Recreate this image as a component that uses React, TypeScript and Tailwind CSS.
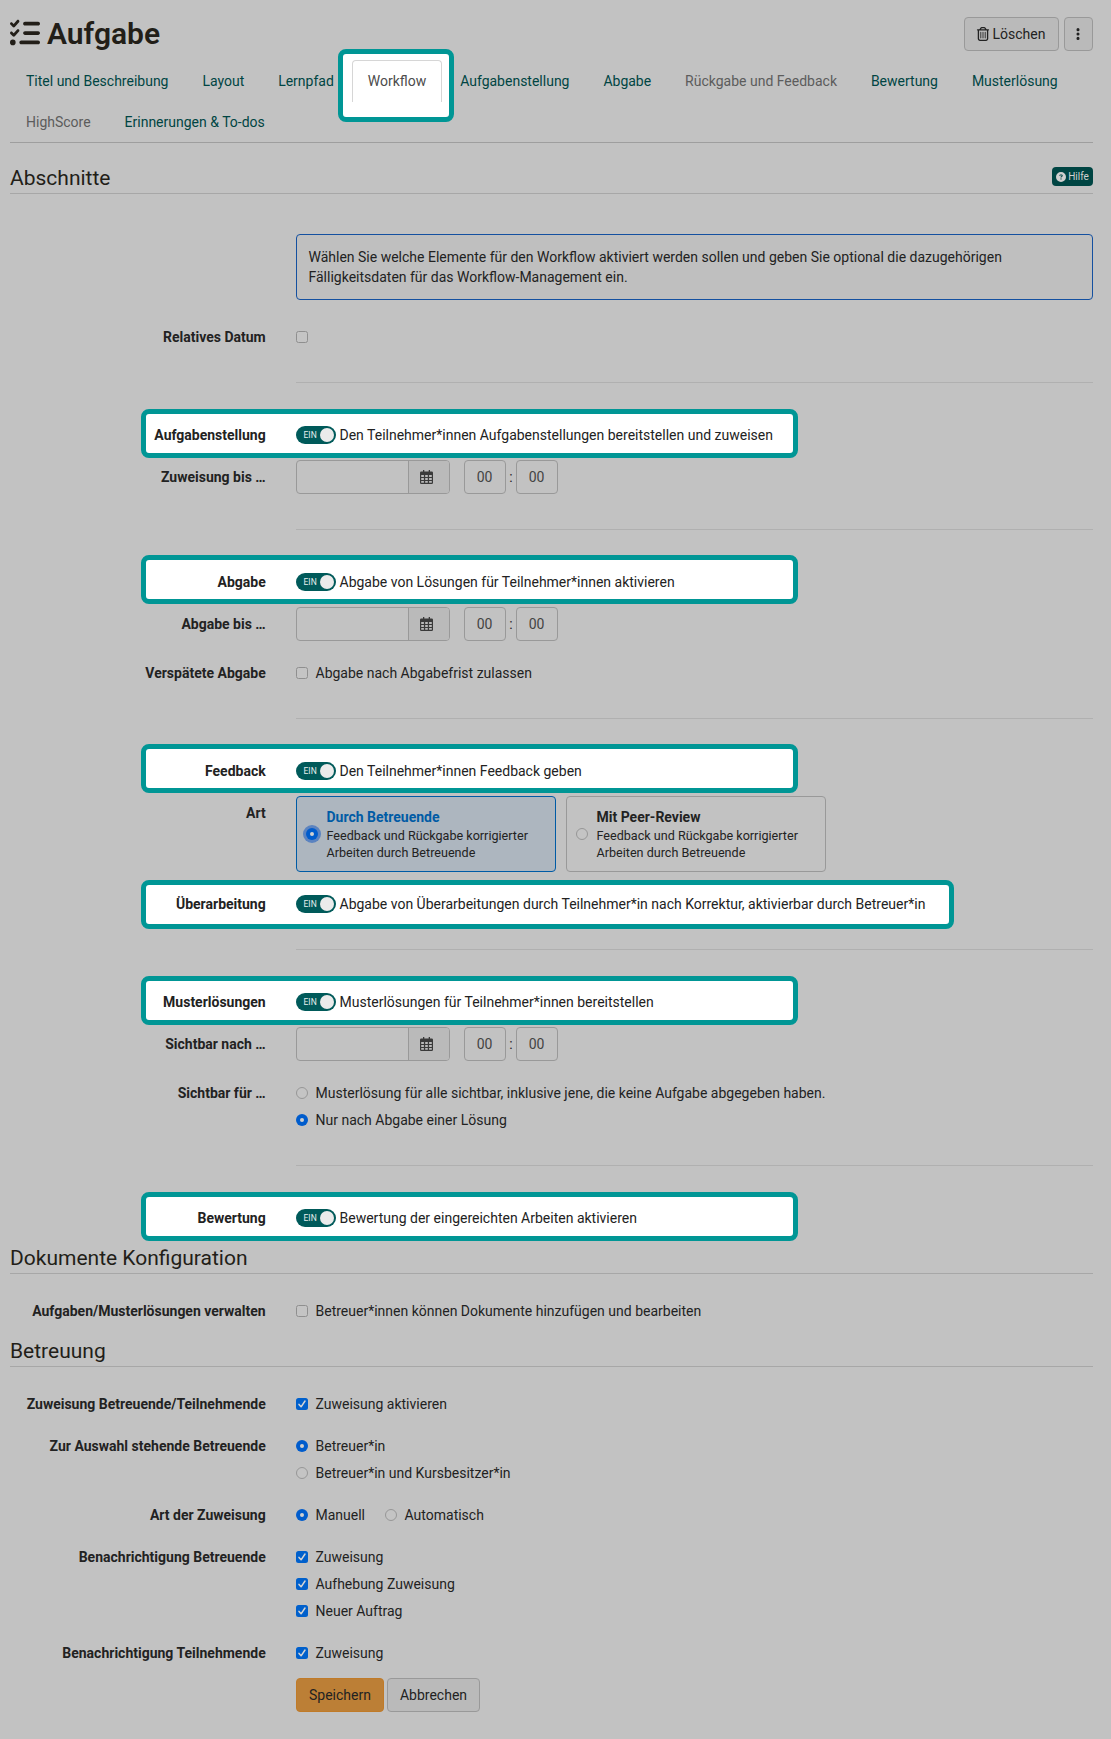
import React, { ReactNode } from "react";
import { FaListCheck, FaRegTrashCan, FaEllipsisVertical, FaCircleQuestion } from "react-icons/fa6";

type TabItem = { label: string; state?: "active" | "disabled" };

const tabs: TabItem[] = [
  { label: "Titel und Beschreibung" },
  { label: "Layout" },
  { label: "Lernpfad" },
  { label: "Workflow", state: "active" },
  { label: "Aufgabenstellung" },
  { label: "Abgabe" },
  { label: "Rückgabe und Feedback", state: "disabled" },
  { label: "Bewertung" },
  { label: "Musterlösung" },
  { label: "HighScore", state: "disabled" },
  { label: "Erinnerungen & To-dos" },
];

function Tab({ label, state }: TabItem) {
  if (state === "active") {
    return (
      <li className="relative isolate -mb-px mr-[1.92px]">
        <span className="absolute -left-3.5 -right-3 -top-[11px] h-[73px] rounded-lg border-[5px] border-[#009695] bg-white -z-10" />
        <a className="block h-[42px] rounded-t border border-b-0 border-[#d6d6d6] px-[15px] py-2.5 text-[#4c4c4c]">{label}</a>
      </li>
    );
  }
  return (
    <li className="-mb-px mr-[1.92px]">
      <a
        className={
          state === "disabled"
            ? "block border border-transparent px-[15px] py-2.5 text-[#5c5c5c]"
            : "block border border-transparent px-[15px] py-2.5 text-[#004543]"
        }
      >
        {label}
      </a>
    </li>
  );
}

function Row({ label, highlight, className = "", children }: { label?: string; highlight?: string; className?: string; children: ReactNode }) {
  return (
    <div className={"relative isolate flex " + className}>
      {highlight && <span className={"absolute left-[131px] -z-10 rounded-lg border-[5px] border-[#009695] bg-white " + highlight} />}
      <div className="w-64 shrink-0 py-[7px] pr-[0.3px] text-right font-bold">{label}</div>
      <div className="ml-[30px] min-w-0 flex-1">{children}</div>
    </div>
  );
}

function Toggle({ children }: { children: ReactNode }) {
  return (
    <div className="flex h-[34px] items-center">
      <span className="mr-[3.5px] flex h-[18px] w-10 items-center justify-between rounded-full bg-[#005a5a] pl-[7.5px] pr-0.5 text-[8.5px] leading-none text-[#e6eeee]">
        EIN
        <span className="size-3.5 rounded-full bg-[#ebebeb]" />
      </span>
      <span>{children}</span>
    </div>
  );
}

function Check({ checked, children }: { checked?: boolean; children?: ReactNode }) {
  return (
    <label className="flex h-5 items-center">
      {checked ? (
        <svg viewBox="0 0 12 12" className="mr-[7.5px] size-3 shrink-0 rounded-[2.5px] bg-[#0060cc]">
          <path d="M3 6.4 5.1 8.8 9 3" fill="none" stroke="#d4d4d4" strokeWidth="1.5" strokeLinecap="round" strokeLinejoin="round" />
        </svg>
      ) : (
        <span className="mr-[7.5px] size-3 shrink-0 rounded-[2.5px] border border-[#8f8f8f] bg-[#c4c4c4]" />
      )}
      <span>{children}</span>
    </label>
  );
}

function RadioDot({ checked }: { checked?: boolean }) {
  return checked ? (
    <span className="flex size-3 shrink-0 items-center justify-center rounded-full bg-[#005ccc]">
      <span className="size-1 rounded-full bg-[#d0d0d0]" />
    </span>
  ) : (
    <span className="block size-3 shrink-0 rounded-full border border-[#979797] bg-[#c4c4c4]" />
  );
}

function Radio({ checked, children }: { checked?: boolean; children: ReactNode }) {
  return (
    <label className="flex h-5 items-center gap-[7.5px]">
      <RadioDot checked={checked} />
      <span>{children}</span>
    </label>
  );
}

function CalendarIcon() {
  return (
    <svg viewBox="0 0 13 14" className="h-3.5 w-[13px]" fill="#3a3a3a">
      <path
        fillRule="evenodd"
        d="M3 0h1.3v1.5h4.4V0H10v1.5h1.7A1.3 1.3 0 0 1 13 2.8v9.9a1.3 1.3 0 0 1-1.3 1.3H1.3A1.3 1.3 0 0 1 0 12.7V2.8a1.3 1.3 0 0 1 1.3-1.3H3zM1.2 5v1.9h2.7V5zm4 0v1.9h2.6V5zm3.9 0v1.9h2.7V5zM1.2 8v1.9h2.7V8zm4 0v1.9h2.6V8zm3.9 0v1.9h2.7V8zM1.2 11v1.8h2.7V11zm4 0v1.8h2.6V11zm3.9 0v1.8h2.7V11z"
      />
    </svg>
  );
}

function DateTime() {
  return (
    <div className="flex h-[34px] items-center text-[#444]">
      <div className="flex h-full w-[154px] overflow-hidden rounded border border-[#999]">
        <div className="flex-1" />
        <div className="flex w-[41px] items-center border-l border-[#999] bg-[#bababa] pl-[11px]">
          <CalendarIcon />
        </div>
      </div>
      <div className="ml-3.5 flex h-full w-[42px] items-center justify-center rounded border border-[#999] pr-px">00</div>
      <span className="w-2.5 text-center text-[#222]">:</span>
      <div className="flex h-full w-[42px] items-center justify-center rounded border border-[#999] pr-px">00</div>
    </div>
  );
}

function Card({ title, selected }: { title: string; selected?: boolean }) {
  return (
    <div
      className={
        selected
          ? "flex h-[76px] w-[260px] items-center rounded border border-[#005ba5] bg-[#adb6bf] pl-[9px]"
          : "flex h-[76px] w-[260px] items-center rounded border border-[#999] pl-[9px]"
      }
    >
      <span className={selected ? "-ml-[3px] mr-[5px] block shrink-0 rounded-full bg-[#5b83c0] p-[3px]" : "mr-2 block shrink-0"}>
        <RadioDot checked={selected} />
      </span>
      <div className="pl-[0.5px]">
        <div className={selected ? "font-bold leading-5 text-[#005ba5]" : "font-bold leading-5"}>{title}</div>
        <div className="text-[12.6px] leading-[17px]">
          Feedback und Rückgabe korrigierter
          <br />
          Arbeiten durch Betreuende
        </div>
      </div>
    </div>
  );
}

function Divider({ className }: { className: string }) {
  return <div className={"ml-[286px] h-px bg-[#b0b0b0] " + className} />;
}

function Heading({ className, children }: { className: string; children: ReactNode }) {
  return <div className={"flex items-start justify-between border-b border-[#a7a7a7] text-[21px] leading-6 text-[#221e18] " + className}>{children}</div>;
}

export default function App() {
  return (
    <div className="h-[1739px] w-[1111px] overflow-hidden bg-[#c2c2c2] pl-2.5 pr-[18px] font-['Roboto',sans-serif] text-[14px] leading-5 text-[#222]">
      <header className="flex h-[60px] items-start justify-between pt-[17px]">
        <h1 className="flex h-[34px] items-center text-[30px] font-semibold leading-none text-[#221e18]">
          <FaListCheck className="mr-[7px] mt-[-3px] size-[30px]" />
          Aufgabe
        </h1>
        <div className="flex gap-[5px]">
          <button className="flex h-[34px] w-[95px] items-center justify-center gap-[3px] rounded border border-[#999] bg-[#bababa] pr-0.5">
            <FaRegTrashCan className="size-3.5" />
            Löschen
          </button>
          <button className="flex h-[34px] w-[29px] items-center justify-center rounded border border-[#999] bg-[#bababa] pr-px">
            <FaEllipsisVertical className="size-3.5" />
          </button>
        </div>
      </header>

      <ul className="flex flex-wrap border-b border-[#9e9e9e]">
        {tabs.map((tab) => (
          <Tab key={tab.label} {...tab} />
        ))}
      </ul>

      <Heading className="mt-[23px] h-7">
        <span>Abschnitte</span>
        <span className="mt-px flex h-[19px] w-[41px] items-center justify-center gap-0.5 rounded-sm bg-[#004543] text-[10px] leading-none text-[#d0d0d0]">
          <FaCircleQuestion className="size-2.5" />
          Hilfe
        </span>
      </Heading>

      <div className="ml-[286px] mt-10 h-[66px] rounded border border-[#1450a0] bg-[#bfbfbf] px-[11.5px] py-3">
        Wählen Sie welche Elemente für den Workflow aktiviert werden sollen und geben Sie optional die dazugehörigen Fälligkeitsdaten für das Workflow-Management ein.
      </div>

      <Row label="Relatives Datum" className="mt-5">
        <div className="py-[7px]"><Check /></div>
      </Row>
      <Divider className="mt-7" />

      <Row label="Aufgabenstellung" className="mt-[35px]" highlight="-top-[9px] h-[49px] w-[657px]">
        <Toggle>Den Teilnehmer*innen Aufgabenstellungen bereitstellen und zuweisen</Toggle>
      </Row>
      <Row label="Zuweisung bis …" className="mt-2"><DateTime /></Row>
      <Divider className="mt-[35px]" />

      <Row label="Abgabe" className="mt-[35px]" highlight="-top-[10px] h-[49px] w-[657px]">
        <Toggle>Abgabe von Lösungen für Teilnehmer*innen aktivieren</Toggle>
      </Row>
      <Row label="Abgabe bis …" className="mt-2"><DateTime /></Row>
      <Row label="Verspätete Abgabe" className="mt-[15px]">
        <div className="py-[7px]"><Check>Abgabe nach Abgabefrist zulassen</Check></div>
      </Row>
      <Divider className="mt-7" />

      <Row label="Feedback" className="mt-[35px]" highlight="-top-[10px] h-[49px] w-[657px]">
        <Toggle>Den Teilnehmer*innen Feedback geben</Toggle>
      </Row>
      <Row label="Art" className="mt-2">
        <div className="flex gap-2.5">
          <Card title="Durch Betreuende" selected />
          <Card title="Mit Peer-Review" />
        </div>
      </Row>
      <Row label="Überarbeitung" className="mt-[15px]" highlight="-top-[7px] h-[49px] w-[813px]">
        <Toggle>Abgabe von Überarbeitungen durch Teilnehmer*in nach Korrektur, aktivierbar durch Betreuer*in</Toggle>
      </Row>
      <Divider className="mt-7" />

      <Row label="Musterlösungen" className="mt-[35px]" highlight="-top-[9px] h-[49px] w-[657px]">
        <Toggle>Musterlösungen für Teilnehmer*innen bereitstellen</Toggle>
      </Row>
      <Row label="Sichtbar nach …" className="mt-2"><DateTime /></Row>
      <Row label="Sichtbar für …" className="mt-[15px]">
        <div className="flex flex-col gap-[7px] py-[7px]">
          <Radio>Musterlösung für alle sichtbar, inklusive jene, die keine Aufgabe abgegeben haben.</Radio>
          <Radio checked>Nur nach Abgabe einer Lösung</Radio>
        </div>
      </Row>
      <Divider className="mt-7" />

      <Row label="Bewertung" className="mt-[35px]" highlight="-top-[9px] h-[49px] w-[657px]">
        <Toggle>Bewertung der eingereichten Arbeiten aktivieren</Toggle>
      </Row>

      <Heading className="mt-[11px] h-7">Dokumente Konfiguration</Heading>
      <Row label="Aufgaben/Musterlösungen verwalten" className="mt-5">
        <div className="py-[7px]"><Check>Betreuer*innen können Dokumente hinzufügen und bearbeiten</Check></div>
      </Row>

      <Heading className="mt-[11px] h-7">Betreuung</Heading>
      <Row label="Zuweisung Betreuende/Teilnehmende" className="mt-5">
        <div className="py-[7px]"><Check checked>Zuweisung aktivieren</Check></div>
      </Row>
      <Row label="Zur Auswahl stehende Betreuende" className="mt-2">
        <div className="flex flex-col gap-[7px] py-[7px]">
          <Radio checked>Betreuer*in</Radio>
          <Radio>Betreuer*in und Kursbesitzer*in</Radio>
        </div>
      </Row>
      <Row label="Art der Zuweisung" className="mt-2">
        <div className="flex gap-5 py-[7px]">
          <Radio checked>Manuell</Radio>
          <Radio>Automatisch</Radio>
        </div>
      </Row>
      <Row label="Benachrichtigung Betreuende" className="mt-2">
        <div className="flex flex-col gap-[7px] py-[7px]">
          <Check checked>Zuweisung</Check>
          <Check checked>Aufhebung Zuweisung</Check>
          <Check checked>Neuer Auftrag</Check>
        </div>
      </Row>
      <Row label="Benachrichtigung Teilnehmende" className="mt-2">
        <div className="py-[7px]"><Check checked>Zuweisung</Check></div>
      </Row>

      <div className="ml-[286px] mt-2 flex gap-[3px]">
        <button className="h-[34px] w-[88px] rounded border border-[#c07a28] bg-[#bc7f36]">Speichern</button>
        <button className="h-[34px] w-[93px] rounded border border-[#999] bg-[#bababa]">Abbrechen</button>
      </div>
    </div>
  );
}
